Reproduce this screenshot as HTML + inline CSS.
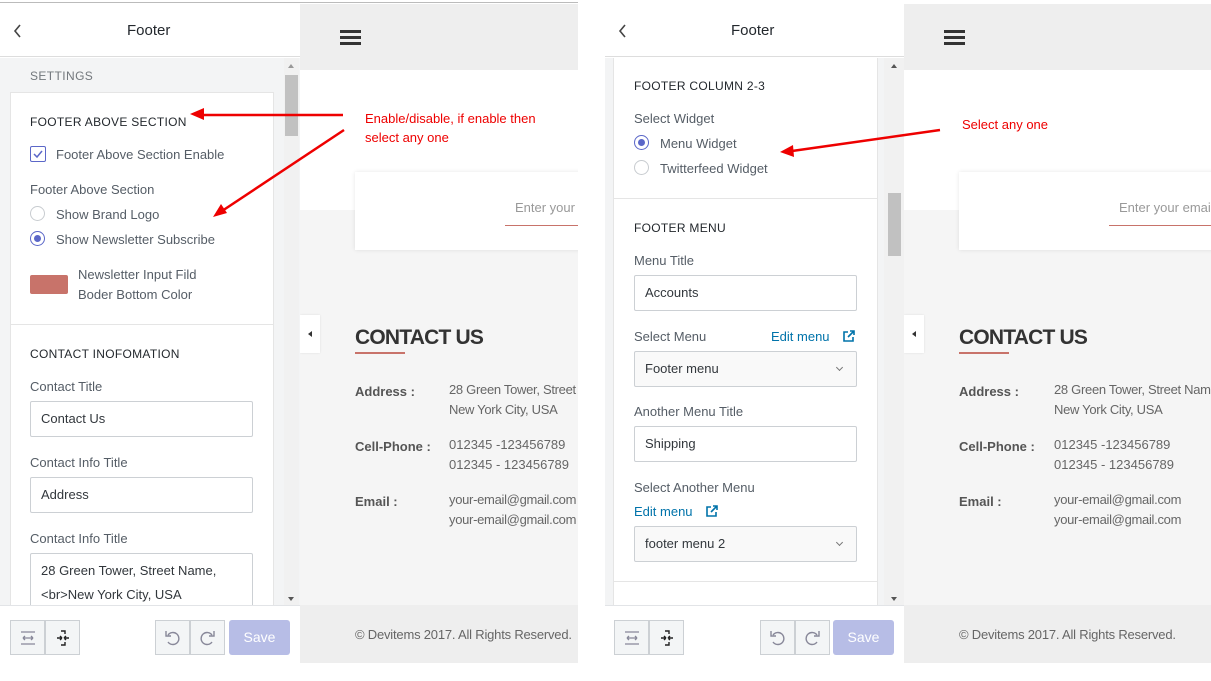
<!DOCTYPE html>
<html><head><meta charset="utf-8">
<style>
*{box-sizing:border-box;margin:0;padding:0}
body{width:1211px;height:681px;background:#fff;position:relative;overflow:hidden;font-family:"Liberation Sans",sans-serif;font-size:13px;color:#555d66}
.a{position:absolute}
.t{position:absolute;white-space:nowrap;line-height:16px;transform:translateY(-8px)}
.h{font-size:12px;color:#23282d;letter-spacing:.3px}
.inp{position:absolute;background:#fff;border:1px solid #ccd0d4;border-radius:2px;height:36px;padding-left:10px;line-height:34px;color:#32373c}
.sel{background:#f9f9f9}
.sel:after{content:"";position:absolute;right:14px;top:13px;width:4px;height:4px;border-right:1px solid #777;border-bottom:1px solid #777;transform:rotate(45deg)}
.rad{position:absolute;width:15px;height:15px;border-radius:50%;border:1px solid #c8ccd0;background:#fff}
.rad.on{border-color:#5b67c8}
.rad.on:after{content:"";position:absolute;left:3px;top:3px;width:7px;height:7px;border-radius:50%;background:#5b67c8}
.btn{position:absolute;top:620px;height:35px;width:35px;background:#f3f5f6;border:1px solid #ccd0d4}
.save{position:absolute;top:620px;height:35px;width:61px;background:#b7bde6;border-radius:3px;color:#fff;font-size:14px;text-align:center;line-height:35px}
.red{color:#ee0000;font-size:13px}
.blue{color:#0073aa}
.pv{position:absolute;top:4px;height:659px;overflow:hidden;background:#f5f5f5}
.pv .t{color:#666}
.lab{font-weight:bold;color:#555!important}
</style></head><body>

<div class="a" style="left:0;top:2px;width:578px;height:1px;background:#bbb"></div>

<!-- LEFT SIDEBAR -->
<div class="a" style="left:0;top:3px;width:300px;height:54px;background:#fff;border-bottom:1px solid #ddd"></div>
<div class="a" style="left:0;top:58px;width:300px;height:547px;background:#f3f4f5"></div>
<svg class="a" style="left:13px;top:24px" width="10" height="14"><path d="M7 1 L2 7 L7 13" stroke="#444" stroke-width="1.6" fill="none"/></svg>
<div class="t" style="left:127px;top:31px;font-size:15px;color:#23282d">Footer</div>
<div class="t" style="left:30px;top:76px;font-size:12px;color:#72777c;letter-spacing:.4px">SETTINGS</div>
<div class="a" style="left:10px;top:92px;width:264px;height:520px;background:#fff;border:1px solid #e5e5e5"></div>
<div class="a" style="left:11px;top:324px;width:262px;height:1px;background:#e5e5e5"></div>
<div class="t h" style="left:30px;top:122px">FOOTER ABOVE SECTION</div>
<div class="a" style="left:30px;top:146px;width:16px;height:16px;border:1px solid #5b67c8;border-radius:2px"></div>
<svg class="a" style="left:32px;top:148px" width="12" height="12"><path d="M2 6 L5 9 L10 3" stroke="#5b67c8" stroke-width="1.5" fill="none"/></svg>
<div class="t" style="left:56px;top:155px">Footer Above Section Enable</div>
<div class="t" style="left:30px;top:190px">Footer Above Section</div>
<div class="rad" style="left:30px;top:206px"></div>
<div class="t" style="left:56px;top:215px">Show Brand Logo</div>
<div class="rad on" style="left:30px;top:231px"></div>
<div class="t" style="left:56px;top:240px">Show Newsletter Subscribe</div>
<div class="a" style="left:30px;top:275px;width:38px;height:19px;background:#c8736a;border-radius:2px"></div>
<div class="t" style="left:78px;top:275px">Newsletter Input Fild</div>
<div class="t" style="left:78px;top:295px">Boder Bottom Color</div>
<div class="t h" style="left:30px;top:354px">CONTACT INOFOMATION</div>
<div class="t" style="left:30px;top:387px">Contact Title</div>
<div class="inp" style="left:30px;top:401px;width:223px">Contact Us</div>
<div class="t" style="left:30px;top:463px">Contact Info Title</div>
<div class="inp" style="left:30px;top:477px;width:223px">Address</div>
<div class="t" style="left:30px;top:539px">Contact Info Title</div>
<div class="inp" style="left:30px;top:553px;width:223px;height:70px;line-height:24px;padding-top:5px;white-space:nowrap;overflow:hidden">28 Green Tower, Street Name,<br>&lt;br&gt;New York City, USA</div>
<div class="a" style="left:284px;top:58px;width:15px;height:547px;background:#f1f1f1"></div>
<div class="a" style="left:285px;top:75px;width:13px;height:61px;background:#c1c1c1"></div>
<div class="a" style="left:288px;top:64px;border:3.5px solid transparent;border-bottom:4px solid #999;border-top:0"></div>
<div class="a" style="left:288px;top:597px;border:3.5px solid transparent;border-top:4px solid #555;border-bottom:0"></div>
<div class="a" style="left:0;top:605px;width:300px;height:58px;background:#fff;border-top:1px solid #e2e4e7"></div>
<div class="btn" style="left:10px"></div><div class="btn" style="left:45px"></div>
<div class="btn" style="left:155px"></div><div class="btn" style="left:190px"></div>
<div class="save" style="left:229px">Save</div>
<svg class="a" style="left:19px;top:629px" width="18" height="18"><path d="M2 3H16M2 15H16M4 9H14M4 9l2-2M4 9l2 2M14 9l-2-2M14 9l-2 2" stroke="#889" stroke-width="1.3" fill="none"/></svg>
<svg class="a" style="left:54px;top:628px" width="18" height="20"><path d="M3 10H8M8 10l-2-2M8 10l-2 2M15 10H10M10 10l2-2M10 10l2 2M7 3H11V6M7 17H11V14" stroke="#222" stroke-width="1.4" fill="none"/></svg>
<svg class="a" style="left:163px;top:628px" width="20" height="20"><path d="M5 7 A6 6 0 1 1 5 14M3 3V8H8" stroke="#889" stroke-width="1.4" fill="none"/></svg>
<svg class="a" style="left:197px;top:628px" width="20" height="20"><path d="M15 7 A6 6 0 1 0 15 14M17 3V8H12" stroke="#889" stroke-width="1.4" fill="none"/></svg>

<!-- LEFT PREVIEW -->
<div class="pv" style="left:300px;width:278px">
  <div class="a" style="left:0;top:0;width:400px;height:66px;background:#eee"></div>
  <div class="a" style="left:0;top:66px;width:400px;height:140px;background:#fff"></div>
  <div class="a" style="left:40px;top:26px;width:21px;height:3px;background:#333;box-shadow:0 6px 0 #333,0 12px 0 #333"></div>
  <div class="a" style="left:55px;top:168px;width:300px;height:78px;background:#fff;box-shadow:0 0 4px rgba(0,0,0,.1)"></div>
  <div class="t" style="left:215px;top:204px;color:#999">Enter your</div>
  <div class="a" style="left:205px;top:221px;width:200px;height:1px;background:#c8736a"></div>
  <div class="a" style="left:0;top:311px;width:20px;height:38px;background:#fff;box-shadow:0 0 2px rgba(0,0,0,.1)"></div>
  <div class="a" style="left:8px;top:327px;border:3px solid transparent;border-right:4px solid #333;border-left:0"></div>
  <div class="t" style="left:55px;top:334px;font-size:21px;font-weight:bold;color:#333;letter-spacing:-.8px;line-height:22px;transform:translateY(-11px)">CONTACT US</div>
  <div class="a" style="left:55px;top:348px;width:50px;height:2px;background:#c8736a"></div>
  <div class="t lab" style="left:55px;top:388px">Address :</div>
  <div class="t" style="left:149px;top:386px;letter-spacing:-.3px">28 Green Tower, Street Name,</div>
  <div class="t" style="left:149px;top:406px;letter-spacing:-.3px">New York City, USA</div>
  <div class="t lab" style="left:55px;top:443px">Cell-Phone :</div>
  <div class="t" style="left:149px;top:441px">012345 -123456789</div>
  <div class="t" style="left:149px;top:461px">012345 - 123456789</div>
  <div class="t lab" style="left:55px;top:498px">Email :</div>
  <div class="t" style="left:149px;top:496px;letter-spacing:-.3px">your-email@gmail.com</div>
  <div class="t" style="left:149px;top:516px;letter-spacing:-.3px">your-email@gmail.com</div>
  <div class="a" style="left:0;top:601px;width:400px;height:58px;background:#eee"></div>
  <div class="t" style="left:55px;top:631px;letter-spacing:-.2px">© Devitems 2017. All Rights Reserved.</div>
</div>

<div class="t red" style="left:365px;top:119px">Enable/disable, if enable then</div>
<div class="t red" style="left:365px;top:138px">select any one</div>
<svg class="a" style="left:0;top:0" width="600" height="300"><path d="M343 115H200" stroke="#e00" stroke-width="2.5"/><path d="M190 114l14-6v12z" fill="#e00"/><path d="M344 130L222 211" stroke="#e00" stroke-width="2.5"/><path d="M213 217l8-13 6 9z" fill="#e00"/></svg>

<!-- RIGHT SIDEBAR -->
<div class="a" style="left:605px;top:4px;width:300px;height:53px;background:#fff;border-bottom:1px solid #ddd"></div>
<div class="a" style="left:605px;top:58px;width:300px;height:547px;background:#f3f4f5"></div>
<svg class="a" style="left:618px;top:24px" width="10" height="14"><path d="M7 1 L2 7 L7 13" stroke="#444" stroke-width="1.6" fill="none"/></svg>
<div class="t" style="left:731px;top:31px;font-size:15px;color:#23282d">Footer</div>
<div class="a" style="left:613px;top:58px;width:265px;height:560px;background:#fff;border-left:1px solid #e5e5e5;border-right:1px solid #e5e5e5"></div>
<div class="a" style="left:614px;top:198px;width:263px;height:1px;background:#e5e5e5"></div>
<div class="a" style="left:614px;top:581px;width:263px;height:1px;background:#e5e5e5"></div>
<div class="t h" style="left:634px;top:86px">FOOTER COLUMN 2-3</div>
<div class="t" style="left:634px;top:119px">Select Widget</div>
<div class="rad on" style="left:634px;top:135px"></div>
<div class="t" style="left:660px;top:144px">Menu Widget</div>
<div class="rad" style="left:634px;top:160px"></div>
<div class="t" style="left:660px;top:169px">Twitterfeed Widget</div>
<div class="t h" style="left:634px;top:228px">FOOTER MENU</div>
<div class="t" style="left:634px;top:261px">Menu Title</div>
<div class="inp" style="left:634px;top:275px;width:223px">Accounts</div>
<div class="t" style="left:634px;top:337px">Select Menu</div>
<div class="t blue" style="left:771px;top:337px">Edit menu</div>
<svg class="a" style="left:842px;top:329px" width="14" height="14"><path d="M6 3H2V12H11V8M8 2H12V6M12 2L6 8" stroke="#0073aa" stroke-width="1.6" fill="none"/></svg>
<div class="inp sel" style="left:634px;top:351px;width:223px">Footer menu</div>
<div class="t" style="left:634px;top:412px">Another Menu Title</div>
<div class="inp" style="left:634px;top:426px;width:223px">Shipping</div>
<div class="t" style="left:634px;top:488px">Select Another Menu</div>
<div class="t blue" style="left:634px;top:512px">Edit menu</div>
<svg class="a" style="left:705px;top:504px" width="14" height="14"><path d="M6 3H2V12H11V8M8 2H12V6M12 2L6 8" stroke="#0073aa" stroke-width="1.6" fill="none"/></svg>
<div class="inp sel" style="left:634px;top:526px;width:223px">footer menu 2</div>
<div class="t h" style="left:634px;top:610px">TWITTERFEED</div>
<div class="a" style="left:884px;top:58px;width:20px;height:547px;background:#f1f1f1"></div>
<div class="a" style="left:888px;top:193px;width:13px;height:63px;background:#c1c1c1"></div>
<div class="a" style="left:891px;top:64px;border:3.5px solid transparent;border-bottom:4px solid #555;border-top:0"></div>
<div class="a" style="left:891px;top:597px;border:3.5px solid transparent;border-top:4px solid #555;border-bottom:0"></div>
<div class="a" style="left:605px;top:605px;width:300px;height:58px;background:#fff;border-top:1px solid #e2e4e7"></div>
<div class="btn" style="left:614px"></div><div class="btn" style="left:649px"></div>
<div class="btn" style="left:760px"></div><div class="btn" style="left:795px"></div>
<div class="save" style="left:833px">Save</div>
<svg class="a" style="left:623px;top:629px" width="18" height="18"><path d="M2 3H16M2 15H16M4 9H14M4 9l2-2M4 9l2 2M14 9l-2-2M14 9l-2 2" stroke="#889" stroke-width="1.3" fill="none"/></svg>
<svg class="a" style="left:658px;top:628px" width="18" height="20"><path d="M3 10H8M8 10l-2-2M8 10l-2 2M15 10H10M10 10l2-2M10 10l2 2M7 3H11V6M7 17H11V14" stroke="#222" stroke-width="1.4" fill="none"/></svg>
<svg class="a" style="left:768px;top:628px" width="20" height="20"><path d="M5 7 A6 6 0 1 1 5 14M3 3V8H8" stroke="#889" stroke-width="1.4" fill="none"/></svg>
<svg class="a" style="left:802px;top:628px" width="20" height="20"><path d="M15 7 A6 6 0 1 0 15 14M17 3V8H12" stroke="#889" stroke-width="1.4" fill="none"/></svg>

<!-- RIGHT PREVIEW -->
<div class="pv" style="left:904px;width:307px">
  <div class="a" style="left:0;top:0;width:400px;height:66px;background:#eee"></div>
  <div class="a" style="left:0;top:66px;width:400px;height:140px;background:#fff"></div>
  <div class="a" style="left:40px;top:26px;width:21px;height:3px;background:#333;box-shadow:0 6px 0 #333,0 12px 0 #333"></div>
  <div class="a" style="left:55px;top:168px;width:300px;height:78px;background:#fff;box-shadow:0 0 4px rgba(0,0,0,.1)"></div>
  <div class="t" style="left:215px;top:204px;color:#999">Enter your email</div>
  <div class="a" style="left:205px;top:221px;width:200px;height:1px;background:#c8736a"></div>
  <div class="a" style="left:0;top:311px;width:20px;height:38px;background:#fff;box-shadow:0 0 2px rgba(0,0,0,.1)"></div>
  <div class="a" style="left:8px;top:327px;border:3px solid transparent;border-right:4px solid #333;border-left:0"></div>
  <div class="t" style="left:55px;top:334px;font-size:21px;font-weight:bold;color:#333;letter-spacing:-.8px;line-height:22px;transform:translateY(-11px)">CONTACT US</div>
  <div class="a" style="left:55px;top:348px;width:50px;height:2px;background:#c8736a"></div>
  <div class="t lab" style="left:55px;top:388px">Address :</div>
  <div class="t" style="left:150px;top:386px;letter-spacing:-.3px">28 Green Tower, Street Name,</div>
  <div class="t" style="left:150px;top:406px;letter-spacing:-.3px">New York City, USA</div>
  <div class="t lab" style="left:55px;top:443px">Cell-Phone :</div>
  <div class="t" style="left:150px;top:441px">012345 -123456789</div>
  <div class="t" style="left:150px;top:461px">012345 - 123456789</div>
  <div class="t lab" style="left:55px;top:498px">Email :</div>
  <div class="t" style="left:150px;top:496px;letter-spacing:-.3px">your-email@gmail.com</div>
  <div class="t" style="left:150px;top:516px;letter-spacing:-.3px">your-email@gmail.com</div>
  <div class="a" style="left:0;top:601px;width:400px;height:58px;background:#eee"></div>
  <div class="t" style="left:55px;top:631px;letter-spacing:-.2px">© Devitems 2017. All Rights Reserved.</div>
</div>

<div class="t red" style="left:962px;top:125px">Select any one</div>
<svg class="a" style="left:0;top:0" width="1211" height="200"><path d="M940 130L792 151" stroke="#e00" stroke-width="2.5"/><path d="M780 152l13-7 1 12z" fill="#e00"/></svg>

</body></html>
